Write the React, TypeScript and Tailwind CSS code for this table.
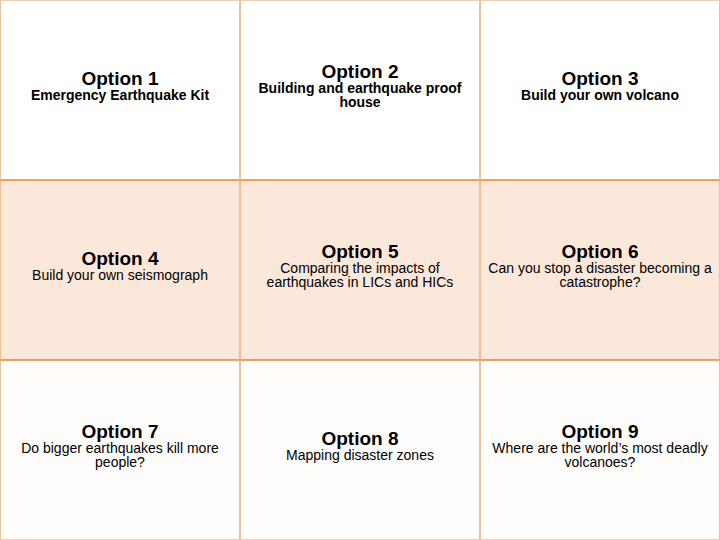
const options = [
  { title: "Option 1", text: "Emergency Earthquake Kit", bold: true },
  { title: "Option 2", text: "Building and earthquake proof house", bold: true },
  { title: "Option 3", text: "Build your own volcano", bold: true },
  { title: "Option 4", text: "Build your own seismograph", bold: false },
  { title: "Option 5", text: "Comparing the impacts of earthquakes in LICs and HICs", bold: false },
  { title: "Option 6", text: "Can you stop a disaster becoming a catastrophe?", bold: false },
  { title: "Option 7", text: "Do bigger earthquakes kill more people?", bold: false },
  { title: "Option 8", text: "Mapping disaster zones", bold: false },
  { title: "Option 9", text: "Where are the world\u2019s most deadly volcanoes?", bold: false },
];

function Cell({ title, text, bold, row }: { title: string; text: string; bold: boolean; row: number }) {
  const rowStyle =
    row === 1
      ? "bg-[#fce8da] border-x-[#ebbf98] border-y-[#e49f64]"
      : row === 0
        ? "bg-white border-x-[#ecc39f] border-t-[#f0cfae] border-b-[#e6a66e]"
        : "bg-[#fefdfc] border-x-[#ecc39f] border-t-[#e6a66e] border-b-[#f0cfae]";
  return (
    <div className={`flex flex-col items-center justify-center border px-1.5 pb-[9px] text-center text-black ${rowStyle}`}>
      <div className="text-[19px] font-bold leading-[19px]">{title}</div>
      <div className={`text-[14px] leading-[14px] ${bold ? "font-bold" : "font-normal"}`}>{text}</div>
    </div>
  );
}

export default function App() {
  return (
    <div className="grid h-[540px] w-[720px] grid-cols-3 grid-rows-3 bg-white font-['Liberation_Sans',Arial,sans-serif]">
      {options.map((o, i) => (
        <Cell key={o.title} title={o.title} text={o.text} bold={o.bold} row={Math.floor(i / 3)} />
      ))}
    </div>
  );
}
